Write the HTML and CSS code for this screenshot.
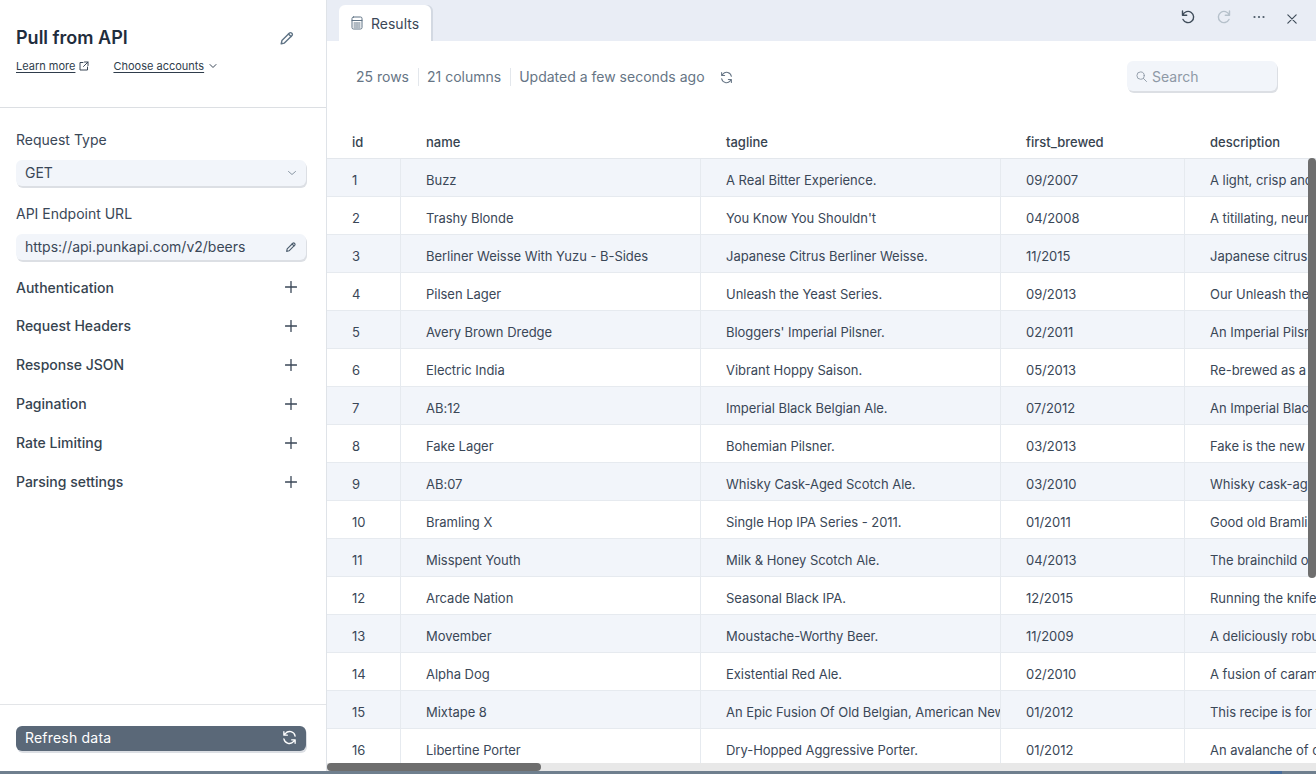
FILE: index.html
```html
<!DOCTYPE html>
<html lang="en">
<head>
<meta charset="utf-8">
<title>Pull from API</title>
<link rel="stylesheet" href="styles.css">
</head>
<body>
<div class="app">
  <div class="panes">
  <aside class="side">
    <header class="side-head">
      <div class="title-row">
        <h1 class="title">Pull from API</h1>
        <svg class="ic-edit" viewBox="0 0 16 16"><path d="M2.200 13.800l.7-3.200 7.600-7.600a1.400 1.400 0 0 1 2 0l.5.5a1.400 1.400 0 0 1 0 2l-7.600 7.600z"/><path d="M9.500 4L12 6.500"/></svg>
      </div>
      <div class="links">
        <a class="link">Learn more</a>
        <svg class="ic-ext" viewBox="0 0 10 10"><path d="M4 1.500H1V9h7.500V6M5.500 1H9v3.500M9 1L4.500 5.500"/></svg>
        <a class="link link-acc">Choose accounts</a>
        <svg class="ic-chev" viewBox="0 0 10 10"><path d="M2 3.500l3 3 3-3"/></svg>
      </div>
    </header>
    <div class="side-body">
      <label class="lbl">Request Type</label>
      <div class="field">
        <span>GET</span>
        <svg class="ic-sel" viewBox="0 0 10 10"><path d="M1.500 3.500L5 6.500l3.500-3"/></svg>
      </div>
      <label class="lbl lbl-2">API Endpoint URL</label>
      <div class="field">
        <span>https://api.punkapi.com/v2/beers</span>
        <svg class="ic-pen" viewBox="0 0 16 16"><path d="M2.200 13.800l.7-3.200 7.600-7.600a1.400 1.400 0 0 1 2 0l.5.5a1.400 1.400 0 0 1 0 2l-7.600 7.600z"/><path d="M9.500 4L12 6.500"/></svg>
      </div>
      <ul class="sections">
        <li class="sec"><span>Authentication</span><svg class="ic-plus" viewBox="0 0 12 12"><path d="M6 .5v11M.5 6h11"/></svg></li>
        <li class="sec"><span>Request Headers</span><svg class="ic-plus" viewBox="0 0 12 12"><path d="M6 .5v11M.5 6h11"/></svg></li>
        <li class="sec"><span>Response JSON</span><svg class="ic-plus" viewBox="0 0 12 12"><path d="M6 .5v11M.5 6h11"/></svg></li>
        <li class="sec"><span>Pagination</span><svg class="ic-plus" viewBox="0 0 12 12"><path d="M6 .5v11M.5 6h11"/></svg></li>
        <li class="sec"><span>Rate Limiting</span><svg class="ic-plus" viewBox="0 0 12 12"><path d="M6 .5v11M.5 6h11"/></svg></li>
        <li class="sec"><span>Parsing settings</span><svg class="ic-plus" viewBox="0 0 12 12"><path d="M6 .5v11M.5 6h11"/></svg></li>
      </ul>
    </div>
    <footer class="side-foot">
      <button class="refresh">
        <span>Refresh data</span>
        <svg class="ic-sync" viewBox="0 0 16 16"><path d="M14 6.500A6 6 0 0 0 3.500 3.800L2 5.500M2 1.800v3.700h3.700M2 9.500a6 6 0 0 0 10.500 2.700l1.500-1.700M14 14.200v-3.700h-3.700"/></svg>
      </button>
    </footer>
  </aside>
  <main class="main">
    <div class="tabbar">
      <div class="tab">
        <svg class="ic-calc" viewBox="0 0 12 14"><rect x="1" y="1" width="10" height="12" rx="1.500"/><path d="M1 4.500h10"/><path d="M3 7h1.500M5.300 7h1.500M7.600 7H9M3 9h1.500M5.300 9h1.500M7.600 9H9M3 11h1.500M5.300 11h1.500M7.600 11H9"/></svg>
        <span>Results</span>
      </div>
      <div class="tools">
        <svg class="ic-tool" viewBox="0 0 16 16"><path d="M2.500 2v4.200h4.200M2.800 6A5.600 5.600 0 1 1 3 10.500"/></svg>
        <svg class="ic-tool ic-off" viewBox="0 0 16 16"><path d="M13.500 2v4.200H9.300M13.200 6A5.600 5.600 0 1 0 13 10.500"/></svg>
        <svg class="ic-more" viewBox="0 0 12 4"><circle cx="1.500" cy="2" r="1.100"/><circle cx="6" cy="2" r="1.100"/><circle cx="10.500" cy="2" r="1.100"/></svg>
        <svg class="ic-close" viewBox="0 0 12 12"><path d="M1 1l10 10M11 1L1 11"/></svg>
      </div>
    </div>
    <div class="stats">
      <span class="stat">25 rows</span>
      <span class="stat">21 columns</span>
      <span class="stat stat-last">Updated a few seconds ago</span>
      <svg class="ic-sync-sm" viewBox="0 0 16 16"><path d="M14 6.500A6 6 0 0 0 3.500 3.800L2 5.500M2 1.800v3.700h3.700M2 9.500a6 6 0 0 0 10.500 2.700l1.500-1.700M14 14.200v-3.700h-3.700"/></svg>
      <div class="search">
        <svg class="ic-search" viewBox="0 0 12 12"><circle cx="5" cy="5" r="4"/><path d="M8 8l3.500 3.500"/></svg>
        <span>Search</span>
      </div>
    </div>
    <div class="tablewrap">
      <table class="grid">
        <colgroup><col class="c-id"><col class="c-name"><col class="c-tag"><col class="c-date"><col class="c-desc"></colgroup>
        <thead><tr><th>id</th><th>name</th><th>tagline</th><th>first_brewed</th><th>description</th></tr></thead>
        <tbody>
          <tr><td>1</td><td>Buzz</td><td>A Real Bitter Experience.</td><td>09/2007</td><td>A light, crisp and bitter IPA brewed with English and American hops.</td></tr>
          <tr><td>2</td><td>Trashy Blonde</td><td>You Know You Shouldn't</td><td>04/2008</td><td>A titillating, neurotic, peroxide punk of a Pale Ale.</td></tr>
          <tr><td>3</td><td>Berliner Weisse With Yuzu - B-Sides</td><td>Japanese Citrus Berliner Weisse.</td><td>11/2015</td><td>Japanese citrus fruit intensifies the sour nature of this German classic.</td></tr>
          <tr><td>4</td><td>Pilsen Lager</td><td>Unleash the Yeast Series.</td><td>09/2013</td><td>Our Unleash the Yeast series was an epic experiment.</td></tr>
          <tr><td>5</td><td>Avery Brown Dredge</td><td>Bloggers' Imperial Pilsner.</td><td>02/2011</td><td>An Imperial Pilsner in collaboration with beer writers.</td></tr>
          <tr><td>6</td><td>Electric India</td><td>Vibrant Hoppy Saison.</td><td>05/2013</td><td>Re-brewed as a spring seasonal, this beer.</td></tr>
          <tr><td>7</td><td>AB:12</td><td>Imperial Black Belgian Ale.</td><td>07/2012</td><td>An Imperial Black Belgian Ale aged in old Invergordon barrels.</td></tr>
          <tr><td>8</td><td>Fake Lager</td><td>Bohemian Pilsner.</td><td>03/2013</td><td>Fake is the new black. Fake is where it is at.</td></tr>
          <tr><td>9</td><td>AB:07</td><td>Whisky Cask-Aged Scotch Ale.</td><td>03/2010</td><td>Whisky cask-aged imperial scotch ale.</td></tr>
          <tr><td>10</td><td>Bramling X</td><td>Single Hop IPA Series - 2011.</td><td>01/2011</td><td>Good old Bramling Cross is elegant, refined.</td></tr>
          <tr><td>11</td><td>Misspent Youth</td><td>Milk &amp; Honey Scotch Ale.</td><td>04/2013</td><td>The brainchild of our small batch brewer.</td></tr>
          <tr><td>12</td><td>Arcade Nation</td><td>Seasonal Black IPA.</td><td>12/2015</td><td>Running the knife-edge between an India Pale.</td></tr>
          <tr><td>13</td><td>Movember</td><td>Moustache-Worthy Beer.</td><td>11/2009</td><td>A deliciously robust, black malted beer.</td></tr>
          <tr><td>14</td><td>Alpha Dog</td><td>Existential Red Ale.</td><td>02/2010</td><td>A fusion of caramel malt flavours and punchy hops.</td></tr>
          <tr><td>15</td><td>Mixtape 8</td><td>An Epic Fusion Of Old Belgian, American New World, And Japanese Hops</td><td>01/2012</td><td>This recipe is for the Belgian Tripel style.</td></tr>
          <tr><td>16</td><td>Libertine Porter</td><td>Dry-Hopped Aggressive Porter.</td><td>01/2012</td><td>An avalanche of cross-continental hop varieties.</td></tr>
        </tbody>
      </table>
      <div class="vbar"></div>
      <div class="htrack"><div class="hthumb"></div></div>
    </div>
  </main>
  </div>
  <div class="edge"><div class="edge-mark"></div></div>
</div>
</body>
</html>
```
FILE: styles.css
```css
* { box-sizing: border-box; }
html, body { margin: 0; height: 100%; }
body {
  font-family: Inter, "Liberation Sans", sans-serif;
  color: #3a4757;
  background: #fff;
  overflow: hidden;
}
svg { fill: none; stroke: currentColor; stroke-linecap: round; stroke-linejoin: round; flex: none; display: block; }

.app { display: flex; flex-direction: column; height: 774px; }
.panes { flex: 1; min-height: 0; display: flex; }

/* Sidebar */
.side {
  width: 327px;
  flex: none;
  display: flex;
  flex-direction: column;
  border-right: 1px solid #dfe3e8;
  background: #fff;
}
.side-head { height: 108px; padding: 26px 30px 0 16px; border-bottom: 1px solid #dcdfe3; }
.title-row { display: flex; align-items: center; justify-content: space-between; height: 24px; }
.title { margin: 0; font-size: 18px; line-height: 24px; font-weight: 600; color: #1f2d3d; }
.ic-edit { width: 16px; height: 16px; color: #5f7385; stroke-width: 1.4; margin-right: 1px; }
.links { display: flex; align-items: center; margin-top: 9px; height: 14px; }
.link { font-size: 11px; line-height: 14px; color: #2f3d4c; text-decoration: underline; text-underline-offset: 2px; }
.link-acc { margin-left: 24px; }
.ic-ext { width: 10px; height: 10px; margin-left: 4px; stroke-width: 1; color: #3a4757; }
.ic-chev { width: 10px; height: 10px; margin-left: 4px; stroke-width: 1; color: #3a4757; }

.side-body { flex: 1; padding: 23px 20px 0 16px; }
.lbl { display: block; font-size: 14px; line-height: 18px; color: #3a4757; margin-bottom: 11px; }
.lbl-2 { margin-top: 19px; }
.field {
  height: 26px;
  display: flex;
  align-items: center;
  justify-content: space-between;
  padding: 0 9px 1px;
  background: #f2f5fa;
  border-radius: 6px;
  box-shadow: 1px 2px 0 #dcdfe4;
  font-size: 14px;
  color: #3a4757;
}
.ic-sel { width: 10px; height: 10px; color: #8b98a5; stroke-width: 1; }
.ic-pen { width: 12px; height: 12px; color: #4c5d6e; stroke-width: 1.500; }
.sections { list-style: none; margin: 7px 0 0; padding: 0; }
.sec {
  height: 39px;
  display: flex;
  align-items: center;
  justify-content: space-between;
  padding-right: 9px;
  font-size: 14px;
  font-weight: 500;
  color: #36434f;
}
.sec:first-child { padding-top: 1px; }
.ic-plus { width: 12px; height: 12px; stroke-width: 1.300; color: #3a4757; }

.side-foot { height: 67px; padding: 21px 20px 0 16px; border-top: 1px solid #e3e5e8; }
.refresh {
  width: 100%;
  height: 25px;
  display: flex;
  align-items: center;
  justify-content: space-between;
  padding: 0 9px 2px;
  border: 0;
  border-radius: 6px;
  background: #5a6878;
  box-shadow: 1px 2px 0 #dcdfe4;
  color: #fff;
  font: 14px Inter, "Liberation Sans", sans-serif;
  letter-spacing: .2px;
}
.ic-sync { width: 15px; height: 15px; stroke-width: 1.400; color: #fff; }

/* Main */
.main { flex: 1; min-width: 0; display: flex; flex-direction: column; position: relative; }
.tabbar {
  height: 41px;
  flex: none;
  display: flex;
  align-items: flex-end;
  justify-content: space-between;
  padding-left: 12px;
  background: #e9edf5;
}
.tab {
  width: 92px;
  height: 36px;
  display: flex;
  align-items: center;
  gap: 8px;
  padding: 0 0 0 12px;
  background: #fff;
  border-radius: 6px 6px 0 0;
  box-shadow: 2px 0 0 #d3d9e2;
  font-size: 14px;
  color: #3a4757;
}
.ic-calc { width: 12px; height: 14px; stroke-width: 1; color: #5f7385; }
.tools { align-self: flex-start; display: flex; align-items: center; height: 34px; padding-right: 19px; color: #3f4c5a; }
.ic-tool { width: 16px; height: 16px; stroke-width: 1.400; margin-right: 20px; }
.ic-off { color: #b6c1cb; margin-right: 21px; }
.ic-more { width: 12px; height: 4px; fill: #4c5a68; stroke: none; margin-right: 22px; }
.ic-close { width: 10px; height: 10px; stroke-width: 1.400; margin-top: 4px; }

.stats {
  height: 72px;
  flex: none;
  display: flex;
  align-items: center;
  padding: 0 39px 0 29px;
  font-size: 14px;
  color: #667585;
}
.stat { padding-right: 9px; margin-right: 8px; line-height: 18px; border-right: 1px solid #e3e7ec; }
.stat-last { border-right: 0; padding-right: 0; margin-right: 15px; }
.ic-sync-sm { width: 13px; height: 13px; stroke-width: 1.300; color: #667585; margin-top: 1px; }
.search {
  margin-left: auto;
  margin-bottom: 2px;
  width: 150px;
  height: 30px;
  display: flex;
  align-items: center;
  gap: 5px;
  padding-left: 9px;
  background: #f2f5fa;
  border-radius: 6px;
  box-shadow: 1px 2px 0 #dcdfe4;
  color: #8e99a6;
}
.ic-search { width: 11px; height: 11px; stroke-width: 1; color: #8e99a6; }

.tablewrap { flex: 1; min-height: 0; overflow: hidden; position: relative; }
.grid { table-layout: fixed; width: 1500px; border-collapse: collapse; font-size: 13px; letter-spacing: -.03px; }
.c-id { width: 73px; }
.c-name { width: 300px; }
.c-tag { width: 300px; }
.c-date { width: 184px; }
.c-desc { width: 643px; }
.grid th {
  height: 45px;
  padding: 13px 0 0 26px;
  text-align: left;
  font-weight: 500;
  letter-spacing: 0;
  color: #36434f;
  border-bottom: 1px solid #e3e7ec;
}
.grid th:first-child, .grid td:first-child { padding-left: 25px; }
.grid td {
  height: 38px;
  padding: 6px 0 0 25.5px;
  white-space: nowrap;
  overflow: hidden;
  color: #3a4757;
  border-bottom: 1px solid #e6eaef;
  border-right: 1px solid #e6eaef;
}
.grid tbody tr:nth-child(odd) td { background: #f2f5fa; }
.vbar { position: absolute; top: 45px; right: 0; width: 8px; height: 420px; background: #6e6e6e; border-radius: 4px; }
.htrack { position: absolute; left: 0; right: 0; bottom: 0; height: 8px; background: #e8e8e8; }
.hthumb { width: 214px; height: 8px; background: #6e6e6e; border-radius: 4px; }
.edge { height: 3px; flex: none; background: #6f7f8e; position: relative; }
.edge-mark { position: absolute; left: 1270px; top: 0; width: 12px; height: 3px; background: #4a6e9c; }
```
